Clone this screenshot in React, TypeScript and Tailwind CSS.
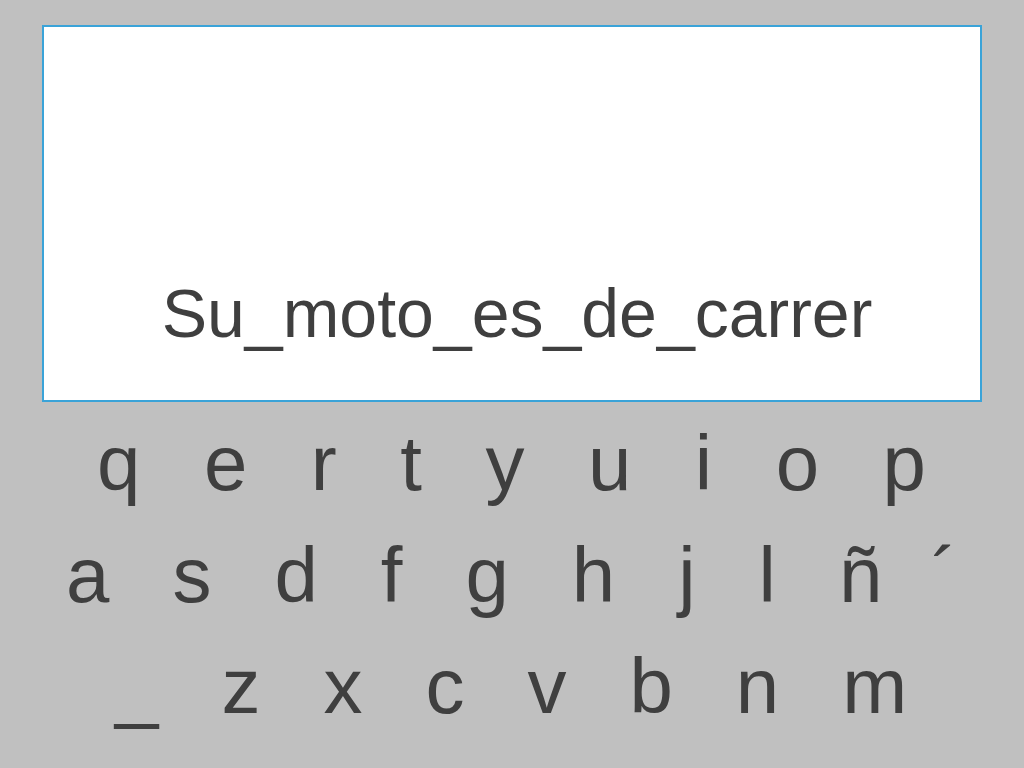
const rows: { keys: string[]; pad: string; gap: string }[] = [
  { keys: ['q', 'e', 'r', 't', 'y', 'u', 'i', 'o', 'p'], pad: 'pl-[97px]', gap: 'gap-[63.5px]' },
  { keys: ['a', 's', 'd', 'f', 'g', 'h', 'j', 'l', 'ñ', '´'], pad: 'pl-[66px]', gap: 'gap-[63px]' },
  { keys: ['_', 'z', 'x', 'c', 'v', 'b', 'n', 'm'], pad: 'pl-[115px]', gap: 'gap-[63px]' },
];

export default function App() {
  return (
    <div className="h-[768px] w-[1024px] overflow-hidden bg-[#c0c0c0] pt-[25px] font-['Liberation_Sans',Arial,sans-serif] text-[#3f3f3f]">
      <div className="ml-[42px] flex h-[377px] w-[940px] flex-col justify-end border-2 border-[#3aa3d8] bg-white pb-[53px] pl-[10px]">
        <p className="text-center text-[68px] leading-none">Su_moto_es_de_carrer</p>
      </div>

      <div className="mt-[22px] flex flex-col gap-[33.5px]">
        {rows.map((row, i) => (
          <div key={i} className={`flex h-[78px] items-start text-[78px] leading-none ${row.pad} ${row.gap}`}>
            {row.keys.map((k) => (
              <span key={k} className={k === '´' ? '-ml-[14px]' : ''}>
                {k}
              </span>
            ))}
          </div>
        ))}
      </div>
    </div>
  );
}
